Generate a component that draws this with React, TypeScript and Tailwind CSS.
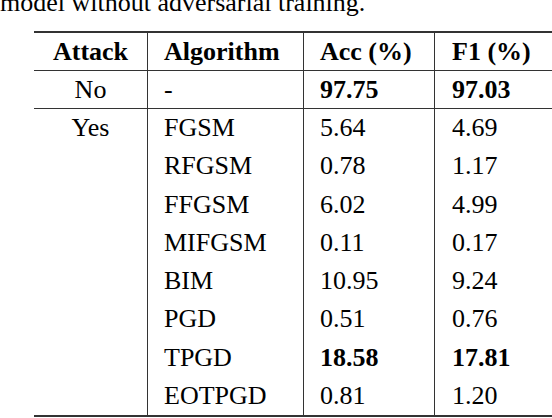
const ROWS: { algo: string; acc: string; f1: string; bold?: boolean }[] = [
  { algo: "FGSM", acc: "5.64", f1: "4.69" },
  { algo: "RFGSM", acc: "0.78", f1: "1.17" },
  { algo: "FFGSM", acc: "6.02", f1: "4.99" },
  { algo: "MIFGSM", acc: "0.11", f1: "0.17" },
  { algo: "BIM", acc: "10.95", f1: "9.24" },
  { algo: "PGD", acc: "0.51", f1: "0.76" },
  { algo: "TPGD", acc: "18.58", f1: "17.81", bold: true },
  { algo: "EOTPGD", acc: "0.81", f1: "1.20" },
];

const col = "grid grid-cols-[113px_156px_131px_131px]";

export default function App() {
  return (
    <div className="h-[418px] w-[552px] overflow-hidden bg-white font-[Liberation_Serif,serif] text-[26px] text-black">
      <p className="-mt-[10px] whitespace-nowrap leading-[26px]">model without adversarial training.</p>
      <div className="ml-[34px] mt-[15px] w-[531px] border-y-2 border-[#333]">
        <div className={`${col} h-[38px] border-b border-[#333] font-bold leading-[37px]`}>
          <div className="text-center">Attack</div>
          <div className="border-l border-[#333] pl-[16px]">Algorithm</div>
          <div className="border-l border-[#333] pl-[16px]">Acc (%)</div>
          <div className="border-l border-[#333] pl-[17px]">F1 (%)</div>
        </div>
        <div className={`${col} h-[38px] border-b border-[#333] leading-[37px]`}>
          <div className="text-center">No</div>
          <div className="border-l border-[#333] pl-[16px]">-</div>
          <div className="border-l border-[#333] pl-[16px] font-bold">97.75</div>
          <div className="border-l border-[#333] pl-[17px] font-bold">97.03</div>
        </div>
        <div className={col}>
          <div className="text-center leading-[38px]">Yes</div>
          <div className="border-l border-[#333] pl-[16px] leading-[38.3px]">
            {ROWS.map((r) => (
              <div key={r.algo}>{r.algo}</div>
            ))}
          </div>
          <div className="border-l border-[#333] pl-[16px] leading-[38.3px]">
            {ROWS.map((r) => (
              <div key={r.algo} className={r.bold ? "font-bold" : ""}>
                {r.acc}
              </div>
            ))}
          </div>
          <div className="border-l border-[#333] pl-[17px] leading-[38.3px]">
            {ROWS.map((r) => (
              <div key={r.algo} className={r.bold ? "font-bold" : ""}>
                {r.f1}
              </div>
            ))}
          </div>
        </div>
      </div>
    </div>
  );
}
